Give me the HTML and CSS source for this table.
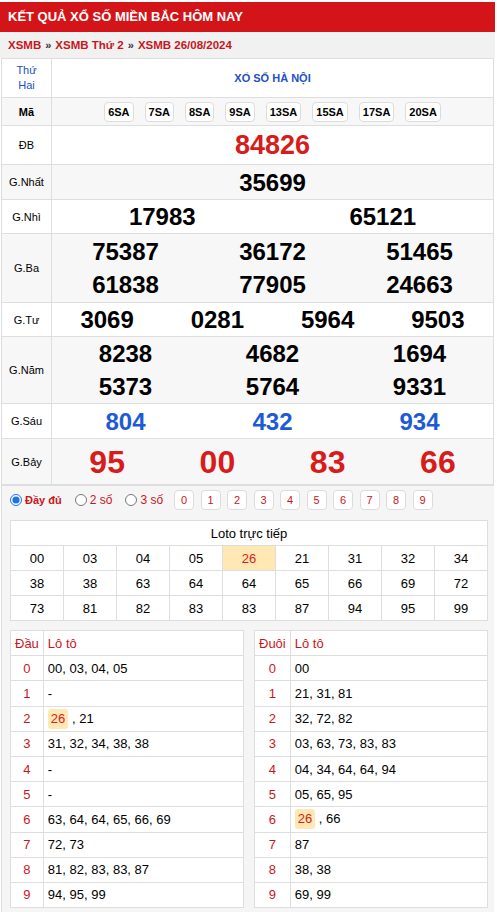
FILE: index.html
```html
<!DOCTYPE html>
<html lang="vi">
<head>
<meta charset="utf-8">
<title>XSMB</title>
<link rel="stylesheet" href="styles.css">
</head>
<body>
<div class="page">
  <h1 class="title">KẾT QUẢ XỔ SỐ MIỀN BẮC HÔM NAY</h1>
  <div class="crumbs"><span>XSMB</span><span class="sep">»</span><span>XSMB Thứ 2</span><span class="sep">»</span><span>XSMB 26/08/2024</span></div>
  <table class="kq">
    <tr class="r-head">
      <td class="lbl day">Thứ<br>Hai</td>
      <td class="prov">XỔ SỐ HÀ NỘI</td>
    </tr>
    <tr class="r-ma alt">
      <td class="lbl b">Mã</td>
      <td><div class="codes"><span class="code">6SA</span><span class="code">7SA</span><span class="code">8SA</span><span class="code">9SA</span><span class="code">13SA</span><span class="code">15SA</span><span class="code">17SA</span><span class="code">20SA</span></div></td>
    </tr>
    <tr class="r-db">
      <td class="lbl">ĐB</td>
      <td><div class="nums c1 db"><span>84826</span></div></td>
    </tr>
    <tr class="r-g1 alt">
      <td class="lbl">G.Nhất</td>
      <td><div class="nums c1"><span>35699</span></div></td>
    </tr>
    <tr class="r-g2">
      <td class="lbl">G.Nhì</td>
      <td><div class="nums c2"><span>17983</span><span>65121</span></div></td>
    </tr>
    <tr class="r-g3 alt">
      <td class="lbl">G.Ba</td>
      <td><div class="nums c3"><span>75387</span><span>36172</span><span>51465</span><span>61838</span><span>77905</span><span>24663</span></div></td>
    </tr>
    <tr class="r-g4">
      <td class="lbl">G.Tư</td>
      <td><div class="nums c4"><span>3069</span><span>0281</span><span>5964</span><span>9503</span></div></td>
    </tr>
    <tr class="r-g5 alt">
      <td class="lbl">G.Năm</td>
      <td><div class="nums c3"><span>8238</span><span>4682</span><span>1694</span><span>5373</span><span>5764</span><span>9331</span></div></td>
    </tr>
    <tr class="r-g6">
      <td class="lbl">G.Sáu</td>
      <td><div class="nums c3 blue"><span>804</span><span>432</span><span>934</span></div></td>
    </tr>
    <tr class="r-g7 alt">
      <td class="lbl">G.Bảy</td>
      <td><div class="nums c4 g7"><span>95</span><span>00</span><span>83</span><span>66</span></div></td>
    </tr>
  </table>

  <div class="lower">
    <div class="filters">
      <label class="opt"><input type="radio" name="mode" checked><span class="strong">Đầy đủ</span></label>
      <label class="opt"><input type="radio" name="mode"><span>2 số</span></label>
      <label class="opt"><input type="radio" name="mode"><span>3 số</span></label>
      <div class="digits">
        <span class="dg">0</span><span class="dg">1</span><span class="dg">2</span><span class="dg">3</span><span class="dg">4</span><span class="dg">5</span><span class="dg">6</span><span class="dg">7</span><span class="dg">8</span><span class="dg">9</span>
      </div>
    </div>

    <table class="loto">
      <tr><th colspan="9">Loto trực tiếp</th></tr>
      <tr><td>00</td><td>03</td><td>04</td><td>05</td><td class="hl">26</td><td>21</td><td>31</td><td>32</td><td>34</td></tr>
      <tr><td>38</td><td>38</td><td>63</td><td>64</td><td>64</td><td>65</td><td>66</td><td>69</td><td>72</td></tr>
      <tr><td>73</td><td>81</td><td>82</td><td>83</td><td>83</td><td>87</td><td>94</td><td>95</td><td>99</td></tr>
    </table>

    <div class="dd">
      <table class="dt">
        <tr><th class="k">Đầu</th><th>Lô tô</th></tr>
        <tr><td class="k">0</td><td>00, 03, 04, 05</td></tr>
        <tr><td class="k">1</td><td>-</td></tr>
        <tr><td class="k">2</td><td><span class="mark">26</span> , 21</td></tr>
        <tr><td class="k">3</td><td>31, 32, 34, 38, 38</td></tr>
        <tr><td class="k">4</td><td>-</td></tr>
        <tr><td class="k">5</td><td>-</td></tr>
        <tr><td class="k">6</td><td>63, 64, 64, 65, 66, 69</td></tr>
        <tr><td class="k">7</td><td>72, 73</td></tr>
        <tr><td class="k">8</td><td>81, 82, 83, 83, 87</td></tr>
        <tr><td class="k">9</td><td>94, 95, 99</td></tr>
      </table>
      <table class="dt">
        <tr><th class="k">Đuôi</th><th>Lô tô</th></tr>
        <tr><td class="k">0</td><td>00</td></tr>
        <tr><td class="k">1</td><td>21, 31, 81</td></tr>
        <tr><td class="k">2</td><td>32, 72, 82</td></tr>
        <tr><td class="k">3</td><td>03, 63, 73, 83, 83</td></tr>
        <tr><td class="k">4</td><td>04, 34, 64, 64, 94</td></tr>
        <tr><td class="k">5</td><td>05, 65, 95</td></tr>
        <tr><td class="k">6</td><td><span class="mark">26</span> , 66</td></tr>
        <tr><td class="k">7</td><td>87</td></tr>
        <tr><td class="k">8</td><td>38, 38</td></tr>
        <tr><td class="k">9</td><td>69, 99</td></tr>
      </table>
    </div>
  </div>
</div>
</body>
</html>
```

FILE: styles.css
```css
* { box-sizing: border-box; }
body {
  margin: 0;
  font-family: "Liberation Sans", Arial, sans-serif;
  color: #000;
  background: #fff;
}
.page { width: 495px; }

.title {
  margin: 2px 0 0;
  height: 30px;
  line-height: 30px;
  background: #d3151a;
  color: #fff;
  font-size: 13px;
  font-weight: bold;
  padding-left: 8px;
}
.crumbs {
  height: 26px;
  line-height: 26px;
  background: #f1f1f1;
  padding-left: 8px;
  font-size: 11.5px;
  font-weight: bold;
  color: #c8161d;
}
.crumbs .sep { color: #333; font-size: 11px; margin: 0 4px; }

.kq {
  border-collapse: collapse;
  width: 493px;
  margin-left: 1px;
}
.kq td {
  border: 1px solid #dedede;
  padding: 0;
  text-align: center;
  vertical-align: middle;
}
.kq .lbl { width: 50px; font-size: 11px; }
.kq .b { font-weight: bold; }
.kq .alt td { background: #f7f7f7; }

.r-head td { height: 39px; }
.r-ma td { height: 28px; }
.r-db td { height: 39px; }
.r-g1 td { height: 35px; }
.r-g2 td { height: 34px; }
.r-g3 td { height: 69px; }
.r-g4 td { height: 33px; }
.r-g5 td { height: 67px; }
.r-g6 td { height: 35px; }
.r-g7 td { height: 46px; }

.day { color: #2250c6; line-height: 15px; }
.prov { color: #2250c6; font-size: 11px; font-weight: bold; }

.codes { display: flex; justify-content: center; gap: 11px; }
.code {
  display: inline-block;
  height: 20px;
  line-height: 18px;
  padding: 0 3px;
  border: 1px solid #dcdcdc;
  border-radius: 4px;
  background: #fff;
  font-size: 11px;
  font-weight: bold;
}

.nums {
  display: grid;
  font-weight: bold;
  font-size: 24px;
  line-height: 33px;
}
.nums.c1 { grid-template-columns: 1fr; }
.nums.c2 { grid-template-columns: repeat(2, 1fr); }
.nums.c3 { grid-template-columns: repeat(3, 1fr); }
.nums.c4 { grid-template-columns: repeat(4, 1fr); }
.nums.db { color: #d71c1c; font-size: 27px; }
.nums.blue { color: #1d5ad4; }
.nums.g7 { color: #d71c1c; font-size: 32px; line-height: 44px; }

.lower {
  width: 493px;
  margin-left: 1px;
  background: #f5f5f5;
  border-top: 1px solid #dedede;
  border-left: 1px solid #dedede;
  padding: 3px 6px 4px 8px;
  min-height: 426px;
}
.filters {
  display: flex;
  align-items: center;
  height: 22px;
  margin-bottom: 9px;
  font-size: 12px;
  color: #c8161d;
}
.opt { display: flex; align-items: center; }
.opt:nth-child(1) { margin-right: 13px; }
.opt:nth-child(2) { margin-right: 13px; }
.opt:nth-child(3) { margin-right: 11px; }
.opt input {
  width: 12px;
  height: 12px;
  margin: 0 3px 0 0;
  accent-color: #1a73e8;
}
.opt .strong { font-weight: bold; font-size: 11px; }
.digits { display: flex; gap: 6.5px; }
.dg {
  width: 20px;
  height: 20px;
  line-height: 18px;
  text-align: center;
  border: 1px solid #dcdcdc;
  border-radius: 4px;
  background: #fff;
  font-size: 11px;
}

.loto {
  width: 478px;
  border-collapse: collapse;
  background: #fff;
  font-size: 13px;
  margin-bottom: 9px;
}
.loto th {
  font-weight: normal;
  height: 25px;
  border: 1px solid #dedede;
}
.loto td {
  width: 11.11%;
  height: 25px;
  text-align: center;
  border: 1px solid #dedede;
}
.loto td.hl { background: #ffe8b3; color: #d71c1c; }

.dd { display: flex; gap: 10px; width: 478px; }
.dt {
  flex: 1;
  width: 234px;
  border-collapse: collapse;
  background: #fff;
  font-size: 13px;
}
.dt th, .dt td {
  height: 25.2px;
  border: 1px solid #dedede;
  padding: 0 4px;
  text-align: left;
  font-weight: normal;
}
.dt th { color: #c8161d; }
.dt .k {
  width: 1%;
  white-space: nowrap;
  text-align: center;
  color: #c8161d;
}
.mark {
  display: inline-block;
  background: #ffe8b3;
  color: #d71c1c;
  border-radius: 3px;
  padding: 0 3px;
  line-height: 20px;
}
```
